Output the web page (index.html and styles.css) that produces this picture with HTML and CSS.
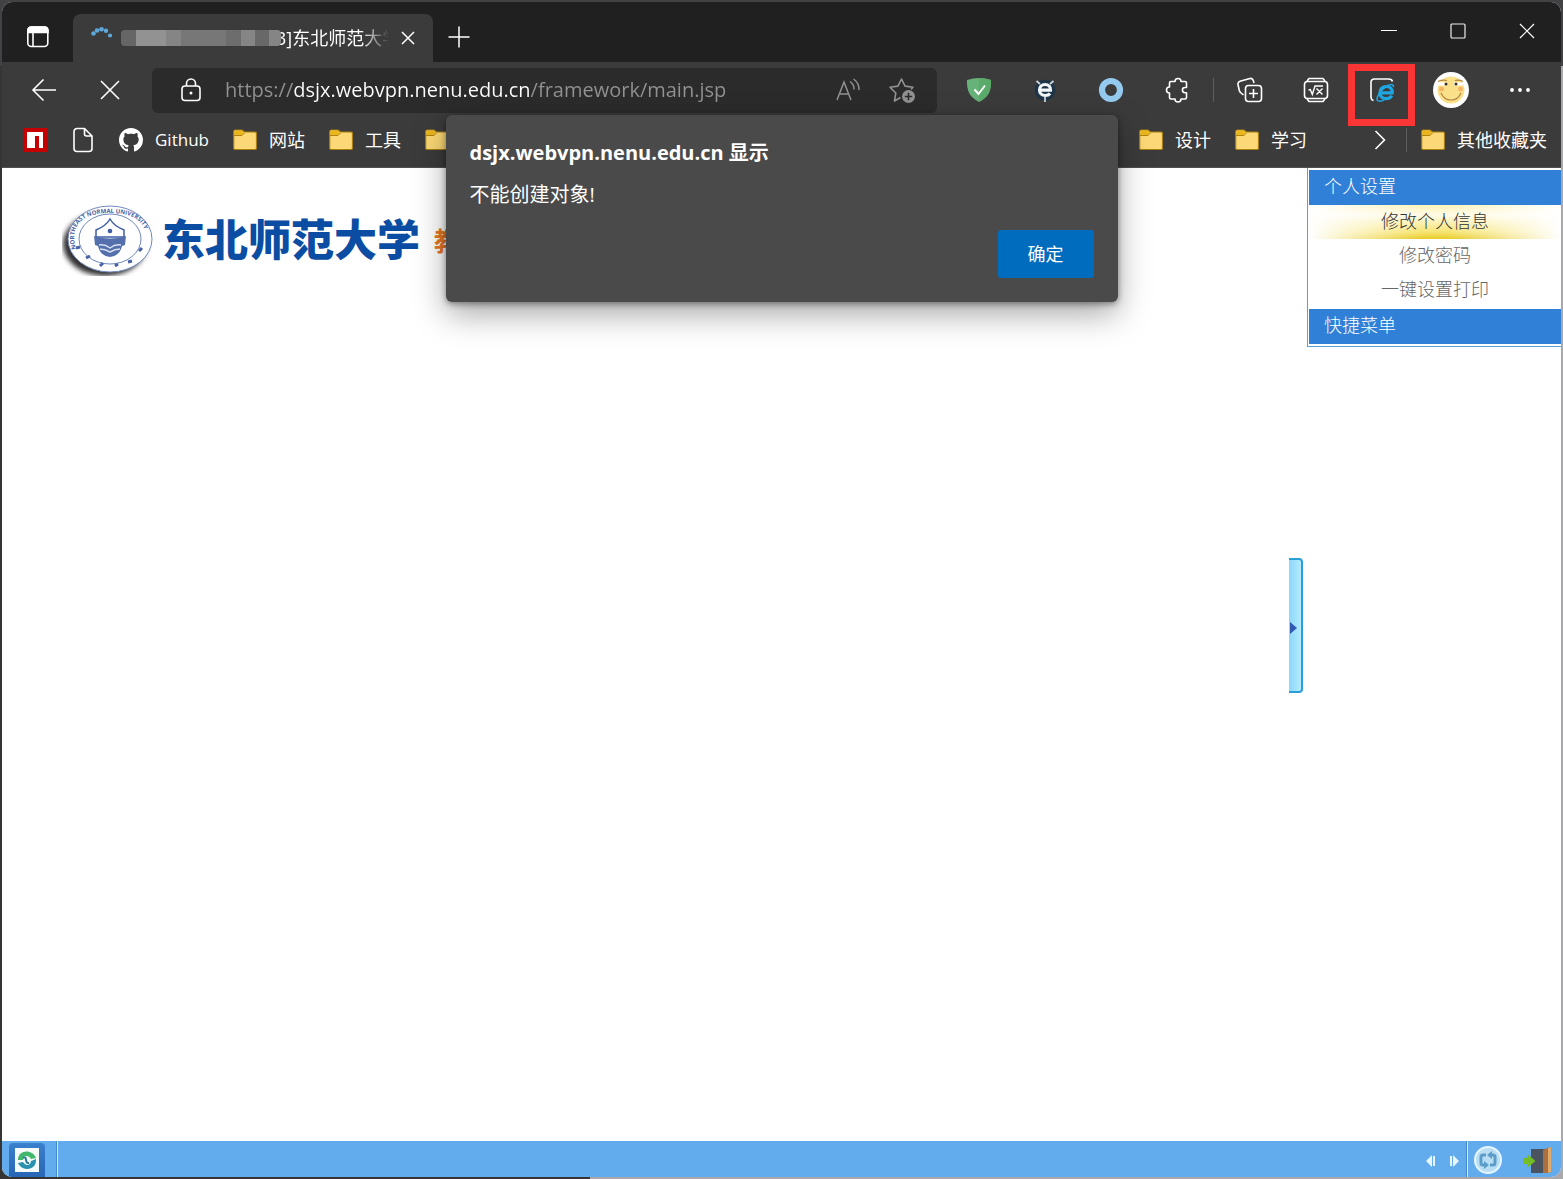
FILE: index.html
```html
<!DOCTYPE html>
<html lang="zh-CN">
<head>
<meta charset="utf-8">
<title>东北师范大学</title>
<link rel="stylesheet" href="styles.css">
</head>
<body>
<div class="window">
  <header class="titlebar">
    <button class="tab-actions" aria-label="标签页操作">
      <svg width="24" height="24" viewBox="0 0 24 24" fill="none" stroke="#fff" stroke-width="1.6"><rect x="1.8" y="2" width="20" height="19.500" rx="3.500"/><path d="M2 7.500V5.500Q2 2 5.500 2h13Q22 2 22 5.500v2z" fill="#fff"/><path d="M7 8v13"/></svg>
    </button>
    <div class="tab">
      <svg class="spinner" width="24" height="24" viewBox="0 0 24 24" fill="#5ea9dc"><circle cx="3.500" cy="7.500" r="2.300"/><circle cx="7" cy="4.500" r="2.300"/><circle cx="11.500" cy="3.200" r="2.300"/><circle cx="16" cy="4.800" r="2.200"/><circle cx="20" cy="9.500" r="2.100"/></svg>
      <span class="redacted"></span>
      <span class="tab-title">3]东北师范大学</span>
      <button class="tab-close" aria-label="关闭标签页">
        <svg width="14" height="14" viewBox="0 0 14 14" stroke="#fff" stroke-width="1.500"><path d="M1 1l12 12M13 1L1 13"/></svg>
      </button>
    </div>
    <button class="new-tab" aria-label="新建标签页">
      <svg width="22" height="22" viewBox="0 0 22 22" stroke="#fff" stroke-width="1.500"><path d="M11 .5v21M.5 11h21"/></svg>
    </button>
    <div class="window-controls">
      <button aria-label="最小化"><svg width="16" height="16" viewBox="0 0 16 16" stroke="#fff"><path d="M0 7.500h16"/></svg></button>
      <button aria-label="最大化"><svg width="16" height="16" viewBox="0 0 16 16" stroke="#eee" fill="none" stroke-width="1.200"><rect x="1" y="1" width="14" height="14" rx="1"/></svg></button>
      <button aria-label="关闭"><svg width="16" height="16" viewBox="0 0 16 16" stroke="#fff" stroke-width="1.200"><path d="M1 1l14 14M15 1L1 15"/></svg></button>
    </div>
  </header>

  <nav class="toolbar" aria-label="工具栏">
    <button aria-label="返回"><svg width="26" height="24" viewBox="0 0 26 24" fill="none" stroke="#fff" stroke-width="1.600"><path d="M25 12H2M12.500 1.500L2 12l10.500 10.500"/></svg></button>
    <button aria-label="停止"><svg width="20" height="20" viewBox="0 0 20 20" stroke="#fff" stroke-width="1.600"><path d="M1 1l18 18M19 1L1 19"/></svg></button>
    <div class="address">
      <svg width="20" height="24" viewBox="0 0 20 24" fill="none" stroke="#fff" stroke-width="1.600"><rect x="1" y="8" width="18" height="14.500" rx="3"/><path d="M5.500 8V5.500a4.500 4.500 0 0 1 9 0V8"/><circle cx="10" cy="15" r="1.500" fill="#fff" stroke="none"/></svg>
      <input class="url" type="text" aria-label="地址" value="https://dsjx.webvpn.nenu.edu.cn/framework/main.jsp">
      <button aria-label="大声朗读"><svg width="24" height="24" viewBox="0 0 24 24" fill="none" stroke="#929292" stroke-width="1.500"><path d="M1 22L8 4l7 18M3.700 16h8.600M14 3.500a9 9 0 0 1 4 8M17.500 1a13 13 0 0 1 5.500 11"/></svg></button>
      <button aria-label="添加到收藏夹"><svg width="26" height="26" viewBox="0 0 26 26" fill="none" stroke="#929292" stroke-width="1.600" stroke-linejoin="round"><path d="M11.500 20.500L5.500 24l1.300-8L1 10.200l7.900-1.100L12.500 2l3.600 7.100 7.900 1.100-2 2"/><circle cx="19.500" cy="19.500" r="6.500" fill="#929292" stroke="none"/><path d="M19.500 15.800v7.400M15.800 19.500h7.400" stroke="#2b2b2b"/></svg></button>
    </div>
    <button aria-label="广告拦截"><svg width="26" height="26" viewBox="0 0 26 26"><path d="M13 1c4 0 8 .7 12 2 .3 10-2 17-12 22C3 20 .7 13 1 3c4-1.300 8-2 12-2z" fill="#67b279"/><path d="M13 1c4 0 8 .7 12 2 .3 10-2 17-12 22z" fill="#5aab69"/><path d="M8.500 12.500l4 4.500L19 8.500" fill="none" stroke="#fff" stroke-width="1.900"/></svg></button>
    <button aria-label="扩展程序"><svg width="24" height="26" viewBox="0 0 24 26" fill="none"><circle cx="12" cy="13" r="10.500" fill="#1d3547"/><path d="M12 20v5M7 7L3.500 4M17 7l3.500-3" stroke="#c9d4dc" stroke-width="1.800"/><path d="M7 13.200h10.500c.3-3.600-2-5.700-5.400-5.700S6.500 9.800 6.500 13s2.300 5.500 5.800 5.500c2 0 3.700-.6 4.700-1.900" stroke="#f3f6f8" stroke-width="3.200"/></svg></button>
    <button aria-label="圆环扩展"><svg width="26" height="26" viewBox="0 0 26 26"><circle cx="13" cy="13" r="9" fill="none" stroke="#95caef" stroke-width="6.200"/></svg></button>
    <button aria-label="扩展"><svg width="26" height="26" viewBox="0 0 26 26" fill="none" stroke="#fff" stroke-width="1.600" stroke-linejoin="round"><path d="M7 4.500h4a3 3 0 0 1 6 0h4A1.500 1.500 0 0 1 22.500 6v4.500H21a2.600 2.600 0 0 0 0 5.200h1.500v4.800A1.500 1.500 0 0 1 21 22h-4a3 3 0 0 1-6 0H7a1.500 1.500 0 0 1-1.500-1.500V16a3 3 0 0 1 0-6V6A1.500 1.500 0 0 1 7 4.500z"/></svg></button>
    <span class="divider"></span>
    <button aria-label="集锦"><svg width="26" height="26" viewBox="0 0 26 26" fill="none" stroke="#fff" stroke-width="1.600"><path d="M6.500 18L3.500 15.500Q2.600 14.600 2.300 13.500L1 7.500Q.6 5 3 4.300L13 1.500Q15.500 1 16.300 3.500L17 6"/><rect x="8.500" y="8.500" width="16" height="16" rx="3"/><path d="M16.500 12v9M12 16.500h9"/></svg></button>
    <button aria-label="数学求解器"><svg width="26" height="26" viewBox="0 0 26 26" fill="none" stroke="#fff" stroke-width="1.600"><rect x="1.500" y="4.500" width="23" height="17" rx="3"/><path d="M4 4l2-2.500h14L22 4M4 22l2 2.500h14l2-2.500"/><path d="M5.500 13l1.800-.5 2 5L12 9h8M13.500 11.500l6 6M19.500 11.500l-6 6" stroke-width="1.400"/></svg></button>
    <button class="ie-mode" aria-label="Internet Explorer 模式"><svg width="26" height="26" viewBox="0 0 26 26" fill="none"><path d="M4.500 23.500Q2 23 2 19.500V5.500Q2 2 5.500 2h14Q23 2 23.500 4.500" stroke="#fff" stroke-width="1.600"/><path d="M11 15.800h12.200c.3-4-2-6.300-5.900-6.300-3.800 0-6.300 2.500-6.300 6.200 0 3.600 2.500 5.900 6.200 5.900 2.600 0 4.500-1 5.500-3" stroke="#1fa6e0" stroke-width="3.200"/><path d="M8.500 23.500c-1.500-2.500 2-9.500 8-13.500 4-2.700 8.500-4 7.800.2M8.500 23.500c1.500 1.500 5 .3 8-1.700" stroke="#1fa6e0" stroke-width="1.600"/></svg></button>
    <button class="profile" aria-label="个人资料"><svg width="36" height="36" viewBox="0 0 36 36" fill="none"><circle cx="18" cy="18" r="18" fill="#fff"/><circle cx="18" cy="18" r="13.500" fill="#fbe08a"/><circle cx="8.500" cy="17" r="2.500" fill="#f5b568"/><circle cx="27.500" cy="17" r="2.500" fill="#f5b568"/><path d="M5 12h9M21 12h9" stroke="#fff" stroke-width="3"/><path d="M5 9.500q4-2 9-1M22 8.500q4-1 8 1M8 21q3 7 10 7t10-7" stroke="#b08540" stroke-width="1.200"/><circle cx="13" cy="12" r="1.500" fill="#3e3020"/><circle cx="23" cy="12" r="1.500" fill="#3e3020"/></svg></button>
    <button aria-label="设置及其他"><svg width="22" height="6" viewBox="0 0 22 6" fill="#fff"><circle cx="3" cy="3" r="1.900"/><circle cx="11" cy="3" r="1.900"/><circle cx="19" cy="3" r="1.900"/></svg></button>
  </nav>

  <nav class="bookmarks" aria-label="收藏夹栏">
    <a href="#" aria-label="npm"><svg width="24" height="24" viewBox="0 0 24 24"><path d="M0 0h24v24H0z" fill="#c40000"/><path d="M4 4h16v16h-4V8h-4v12H4z" fill="#fff"/></svg></a>
    <a href="#" aria-label="页面"><svg width="24" height="26" viewBox="0 0 24 26" fill="none" stroke="#fff" stroke-width="1.600" stroke-linejoin="round"><path d="M6 1.500h7.500L21 9v12.500a3 3 0 0 1-3 3H6a3 3 0 0 1-3-3v-17a3 3 0 0 1 3-3zM13.500 1.500V7a2 2 0 0 0 2 2H21"/></svg></a>
    <a class="latin" href="#"><svg width="24" height="24" viewBox="0 0 16 16" fill="#fff"><path d="M8 0C3.580 0 0 3.580 0 8c0 3.540 2.290 6.530 5.470 7.590.4.070.55-.17.55-.38 0-.19-.01-.82-.01-1.490-2.010.37-2.530-.49-2.690-.94-.09-.23-.48-.94-.82-1.130-.28-.15-.68-.52-.01-.53.63-.01 1.080.58 1.230.82.72 1.210 1.870.87 2.330.66.070-.52.280-.87.510-1.070-1.780-.2-3.640-.89-3.640-3.950 0-.87.310-1.590.82-2.150-.08-.2-.36-1.020.08-2.120 0 0 .67-.21 2.200.82.640-.18 1.320-.27 2-.27s1.360.09 2 .27c1.530-1.040 2.200-.82 2.200-.82.440 1.100.160 1.920.080 2.120.510.560.820 1.270.820 2.150 0 3.070-1.870 3.750-3.650 3.950.290.250.540.730.540 1.480 0 1.070-.01 1.930-.01 2.200 0 .210.150.460.550.380A8.010 8.010 0 0 0 16 8c0-4.420-3.580-8-8-8z"/></svg>Github</a>
    <a href="#"><svg class="folder" viewBox="0 0 24 24"><use href="#folder"/></svg>网站</a>
    <a href="#"><svg class="folder" viewBox="0 0 24 24"><use href="#folder"/></svg>工具</a>
    <a href="#" aria-label="文件夹"><svg class="folder" viewBox="0 0 24 24"><use href="#folder"/></svg></a>
    <a class="bookmarks-tail" href="#"><svg class="folder" viewBox="0 0 24 24"><use href="#folder"/></svg>设计</a>
    <a href="#"><svg class="folder" viewBox="0 0 24 24"><use href="#folder"/></svg>学习</a>
    <button class="more" aria-label="更多收藏"><svg width="12" height="20" viewBox="0 0 12 20" fill="none" stroke="#fff" stroke-width="1.600"><path d="M1.500 1L10.500 10l-9 9"/></svg></button>
    <span class="divider"></span>
    <a href="#"><svg class="folder" viewBox="0 0 24 24"><use href="#folder"/></svg>其他收藏夹</a>
  </nav>

  <div class="page">
    <main class="workspace">
      <h1 class="brand">
        <svg width="92" height="72" viewBox="0 0 92 72" fill="none" aria-label="校徽">
          <defs>
            <filter id="soft"><feGaussianBlur stdDeviation="2.500"/></filter>
            <path id="ring" d="M14 45C5 12 34 9 48 9s43 3 34 36"/>
          </defs>
          <ellipse cx="43" cy="40" rx="42" ry="32" fill="#333" filter="url(#soft)"/>
          <ellipse cx="48" cy="35" rx="42" ry="33" fill="#fff" stroke="#7189bd"/>
          <ellipse cx="48" cy="35" rx="31" ry="25" stroke="#6f86bb"/>
          <text font-size="6" font-weight="700" fill="#4763a5"><textPath href="#ring">NORTHEAST NORMAL UNIVERSITY</textPath></text>
          <path d="M48 15q4 7 14 11v7H34v-7q10-4 14-11z" fill="#fff" stroke="#3e5da4" stroke-width="1.500"/>
          <path d="M32 32q16 5 32 0l-1 9-3 1q-2 10-12 11-10-1-12-11l-3-1z" fill="#546fab"/>
          <path d="M37 41q6-1 11 3 5-4 11-3M38 45q5 0 10 3 5-3 10-3" stroke="#d5def0" stroke-width="1.500"/>
          <circle cx="48" cy="27" r="2.300" fill="#3e5da4"/>
          <path d="M14 44l4-1M24 54l4-2M38 62l3-3M53 62l3-2M66 58l4-1M77 47l3-3" stroke="#4763a5" stroke-width="3"/>
        </svg>
        <span class="brand-name">东北师范大学</span>
        <span class="brand-system">教</span>
      </h1>
    </main>
    <button class="collapse" aria-label="收起侧栏"><svg width="7" height="12" viewBox="0 0 7 12"><path d="M0 0l7 6-7 6z" fill="#315bb0"/></svg></button>
    <aside class="side-menu">
      <h2>个人设置</h2>
      <ul>
        <li><a class="active" href="#">修改个人信息</a></li>
        <li><a href="#">修改密码</a></li>
        <li><a href="#">一键设置打印</a></li>
      </ul>
      <h2>快捷菜单</h2>
    </aside>
  </div>

  <footer class="taskbar">
    <button class="start" aria-label="开始"><svg width="24" height="24" viewBox="0 0 24 24" fill="none"><path d="M0 0h24v24H0z" fill="#f4faf8"/><path d="M3 12c0-11 15-11 18-2l-5 1c-2-4-8-4-8 1" fill="#43b86c"/><path d="M21 11c1 12-14 13-18 4l5-1c3 5 8 3 8-1" fill="#2a91ae"/><path d="M8 10c5-3 1 6 6 5" stroke="#27789c" stroke-width="2"/></svg></button>
    <span class="groove"></span>
    <div class="pager">
      <button aria-label="向左"><svg width="10" height="12" viewBox="0 0 10 12" fill="#e9f5ff"><path d="M6 0v12L0 6zM7 1h2v10H7z"/></svg></button>
      <button aria-label="向右"><svg width="10" height="12" viewBox="0 0 10 12" fill="#e9f5ff"><path d="M4 0v12l6-6zM1 1h2v10H1z"/></svg></button>
    </div>
    <span class="groove"></span>
    <button class="tray" aria-label="切换"><svg width="30" height="30" viewBox="0 0 30 30" fill="none"><circle cx="15" cy="15" r="13" fill="#b9def4" stroke="#e4f5fd" stroke-width="2"/><path d="M13 10h-3q-2 0-2 2v6q0 2 2 2h2M17 20h3q2 0 2-2v-6q0-2-2-2h-2" stroke="#5b9cc9" stroke-width="3"/><path d="M11 16l5 4-5 4zM19 6l-5 4 5 4z" fill="#5b9cc9"/></svg></button>
    <button class="tray" aria-label="退出"><svg width="30" height="28" viewBox="0 0 30 28"><path d="M8 3h15v24H8z" fill="#4b5260"/><path d="M20 4l7-3v26h-7z" fill="#a9713f"/><path d="M25 2l3-1v25l-3 1z" fill="#e0aa6c"/><path d="M1 13h4v-3l6 5-6 5v-3H1z" fill="#74bd25" stroke="#74bd25" stroke-width="2" stroke-linejoin="round"/></svg></button>
  </footer>

  <dialog class="alert" open aria-labelledby="alert-title">
    <h2 id="alert-title">dsjx.webvpn.nenu.edu.cn 显示</h2>
    <p>不能创建对象!</p>
    <button class="confirm">确定</button>
  </dialog>
</div>
<svg class="sprite" width="0" height="0" aria-hidden="true">
  <symbol id="folder" viewBox="0 0 24 24"><path d="M.7 3.500Q.7 2 2.200 2H9l2.500 2H22q1.500 0 1.500 1.500V20q0 1.500-1.500 1.500H2.200Q.7 21.500.7 20z" fill="#fcd976" stroke="#a77e10" stroke-width="1.200"/><path d="M1.300 3.500q0-.9.900-.9h6.500L11 4.500 9 7H1.300z" fill="#eab61c"/><path d="M1 7.500h8L11.500 5" fill="none" stroke="#b0820c"/></symbol>
</svg>
</body>
</html>
```
FILE: styles.css
```css
* { box-sizing: border-box; }

body {
  margin: 0;
  min-height: 100vh;
  padding: 2px;
  display: flex;
  background: linear-gradient(#424244 66px, transparent 66px), linear-gradient(90deg, #353536 590px, #a9a9ab 590px);
  font-family: "Open Sans", "Noto Sans CJK SC", sans-serif;
  font-size: 18px;
  color: #fff;
}

button {
  padding: 0;
  border: 0;
  background: none;
  color: inherit;
  font: inherit;
  display: flex;
  align-items: center;
  justify-content: center;
}

a { color: inherit; text-decoration: none; }
h1, h2, p, ul { margin: 0; padding: 0; }
svg { display: block; flex: none; }
.sprite { position: absolute; }

.window {
  position: relative;
  flex: 1;
  min-width: 0;
  display: flex;
  flex-direction: column;
  border-radius: 10px;
  overflow: hidden;
  background: #fff;
}

/* Title bar */
.titlebar {
  display: flex;
  align-items: flex-end;
  height: 60px;
  background: #202020;
}
.tab-actions { width: 71px; height: 50px; }
.tab {
  display: flex;
  align-items: center;
  width: 360px;
  height: 48px;
  padding: 0 12px 0 17px;
  border-radius: 8px 8px 0 0;
  background: #3b3b3b;
}
.redacted {
  z-index: 1;
  width: 160px;
  height: 16px;
  margin: 0 -5px 0 7px;
  border-radius: 4px;
  background: linear-gradient(90deg, #666 15px, #929292 15px 45px, #858585 45px 60px, #777 60px 105px, #6d6d6d 105px 120px, #858585 120px 134px, #686868 134px 148px, #858585 148px);
}
.tab-title {
  flex: 1;
  overflow: hidden;
  white-space: nowrap;
  line-height: 24px;
  mask-image: linear-gradient(90deg, #000 75%, transparent);
}
.tab-close { width: 26px; height: 26px; margin-left: 6px; }
.new-tab { width: 52px; height: 50px; }
.window-controls { display: flex; align-self: flex-start; margin-left: auto; }
.window-controls button { width: 69px; height: 58px; }

/* Toolbar */
.toolbar {
  display: flex;
  align-items: center;
  height: 56px;
  padding: 0 8px 0 9px;
  background: #3b3b3b;
}
.toolbar > button { width: 66px; height: 56px; }
.toolbar > .profile { width: 72px; }
.divider { width: 1px; height: 24px; margin: 0 3px; background: #5e5e5e; }
.address {
  flex: 1;
  min-width: 0;
  display: flex;
  align-items: center;
  height: 45px;
  margin: 0 9px;
  padding: 0 8px 0 29px;
  border-radius: 6px;
  background: #2b2b2b;
}
.address button { width: 54px; height: 44px; }
.url {
  flex: 1;
  min-width: 0;
  margin-left: 24px;
  padding: 0;
  border: 0;
  font: inherit;
  font-size: 20px;
  line-height: 28px;
  color: transparent;
  background: linear-gradient(90deg, #929292 68px, #fff 68px 305px, #929292 305px);
  background-clip: text;
}
.ie-mode { position: relative; }
.ie-mode::after {
  content: "";
  position: absolute;
  inset: 2px 0 -8px -1px;
  border: 7px solid #fa3535;
}

/* Favourites bar */
.bookmarks {
  display: flex;
  align-items: center;
  height: 50px;
  padding: 0 2px 6px 9px;
  border-bottom: 1px solid #505050;
  background: #3b3b3b;
  white-space: nowrap;
}
.bookmarks a {
  display: flex;
  align-items: center;
  gap: 12px;
  padding: 0 12px;
  line-height: 24px;
}
.bookmarks .latin { font-size: 17px; }
.folder { width: 24px; height: 24px; }
.bookmarks-tail { margin-left: auto; }
.more { width: 26px; height: 32px; margin: 0 10px 0 48px; }
.bookmarks .divider { margin: 0 2px 0 3px; }

/* Page */
.page { flex: 1; display: flex; align-items: flex-start; }
.workspace { flex: 1; min-width: 0; padding: 36px 0 0 60px; }
.brand { display: flex; align-items: center; white-space: nowrap; }
.brand-name {
  margin-left: 8px;
  color: #0b4da2;
  font-size: 43px;
  font-weight: 900;
  line-height: 60px;
}
.brand-system { margin-left: 14px; color: #e87722; font-size: 26px; }
.collapse {
  justify-content: flex-start;
  align-self: center;
  width: 14px;
  height: 135px;
  margin: 0 4px 58px 0;
  padding: 4px 0 0 1px;
  border: solid #2a9fd6;
  border-width: 2px 2px 2px 0;
  border-radius: 0 4px 4px 0;
  background: linear-gradient(90deg, #8cd8fb, #b5ebff);
}
.side-menu {
  width: 254px;
  padding: 2px 0 2px 1px;
  border: solid #5a9fd6;
  border-width: 0 0 1px 1px;
  font-family: "Liberation Serif", "Noto Sans CJK SC", serif;
  font-weight: 300;
}
.side-menu h2 {
  padding-left: 15px;
  background: #3080d8;
  font-size: 18px;
  font-weight: 300;
  line-height: 35px;
}
.side-menu ul { padding-bottom: 2px; list-style: none; }
.side-menu li a { display: block; color: #666; line-height: 34px; text-align: center; }
.side-menu .active {
  color: #333;
  background:
    linear-gradient(90deg, #fff, transparent 45% 55%, #fff),
    linear-gradient(#fff3b8, #fffbe6 30%, #f6e470 80%, #e8cb28);
}

/* Taskbar */
.taskbar {
  display: flex;
  align-items: center;
  height: 36px;
  padding: 0 8px 0 7px;
  background: #62abed;
}
.start {
  width: 36px;
  height: 34px;
  margin: 2px 11px 0 0;
  border-radius: 4px 4px 0 0;
  background: linear-gradient(#3a80cc, #2866b5);
}
.groove { width: 2px; height: 36px; border-left: 1px solid #4589c9; border-right: 1px solid #d4eaff; }
.pager { display: flex; gap: 13px; margin: 4px 7px 0 auto; }
.tray { width: 30px; height: 34px; margin: 2px 0 0 5px; }
.tray + .tray { margin-left: 20px; }

/* Script alert */
.alert {
  position: absolute;
  inset: 113px 0 auto;
  width: 672px;
  margin: 0 auto;
  padding: 24px;
  border: 0;
  border-radius: 6px;
  background: #4a4a4a;
  color: #fff;
  box-shadow: 0 12px 32px rgb(0 0 0 / 35%), 0 2px 6px rgb(0 0 0 / 40%);
}
.alert h2 { font-size: 20px; line-height: 28px; }
.alert p { margin-top: 14px; font-size: 20px; line-height: 28px; }
.confirm {
  width: 96px;
  height: 48px;
  margin: 21px 0 0 auto;
  padding-bottom: 2px;
  border-radius: 3px;
  background: #006cbe;
}
```
